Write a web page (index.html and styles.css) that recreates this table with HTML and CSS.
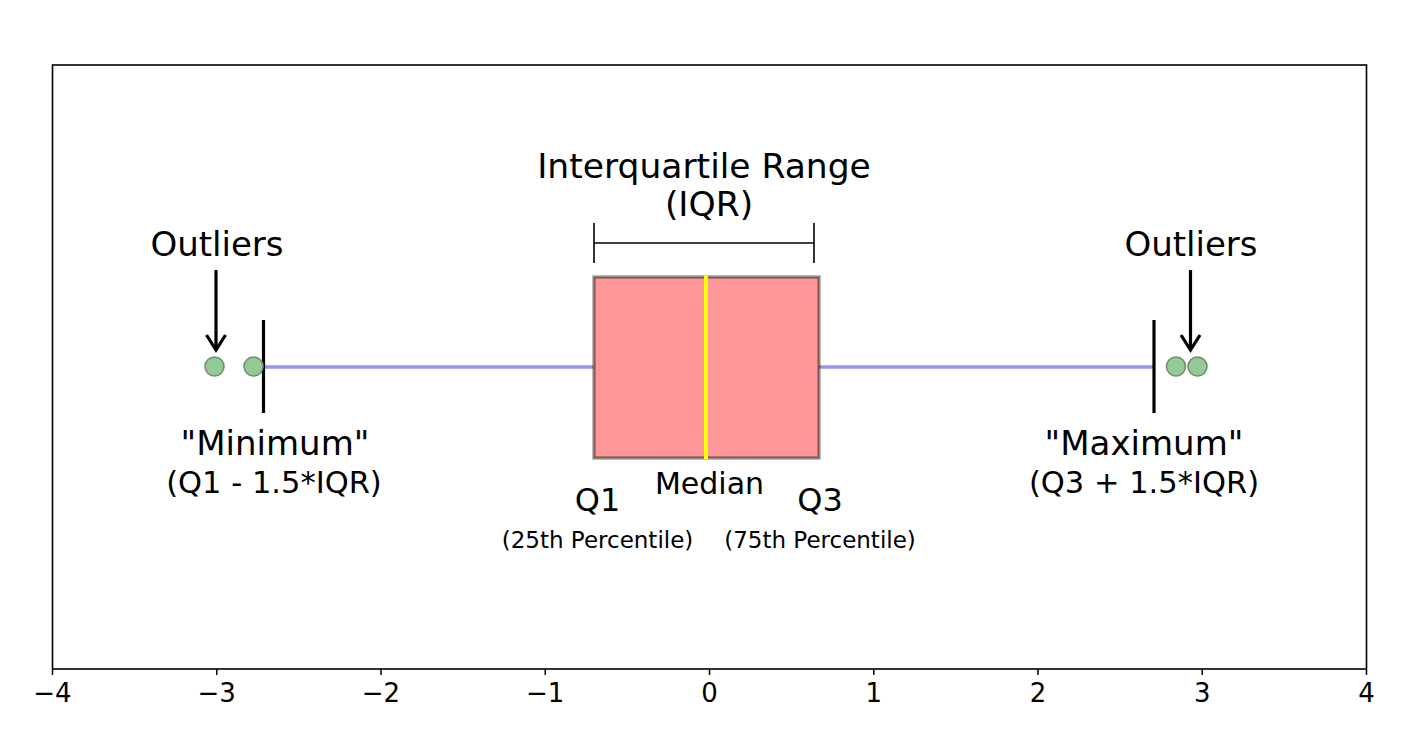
FILE: index.html
```html
<!DOCTYPE html>
<html lang="en">
<head>
<meta charset="utf-8">
<title>Box plot anatomy</title>
<link rel="stylesheet" href="styles.css">
</head>
<body>
<main class="page">
  <figure class="figure">
    <svg class="chart" width="1422" height="740" viewBox="0 0 1422 740" xmlns="http://www.w3.org/2000/svg">
      <!-- axes frame -->
      <rect class="frame" x="52.5" y="65" width="1314" height="604"/>

      <!-- ticks -->
      <g class="ticks">
        <line x1="52.5" y1="669" x2="52.5" y2="675"/>
        <line x1="216.75" y1="669" x2="216.75" y2="675"/>
        <line x1="381" y1="669" x2="381" y2="675"/>
        <line x1="545.25" y1="669" x2="545.25" y2="675"/>
        <line x1="709.5" y1="669" x2="709.5" y2="675"/>
        <line x1="873.75" y1="669" x2="873.75" y2="675"/>
        <line x1="1038" y1="669" x2="1038" y2="675"/>
        <line x1="1202.25" y1="669" x2="1202.25" y2="675"/>
        <line x1="1366.5" y1="669" x2="1366.5" y2="675"/>
      </g>
      <g class="tick-labels">
        <text x="52.5" y="702">−4</text>
        <text x="216.75" y="702">−3</text>
        <text x="381" y="702">−2</text>
        <text x="545.25" y="702">−1</text>
        <text x="709.5" y="702">0</text>
        <text x="873.75" y="702">1</text>
        <text x="1038" y="702">2</text>
        <text x="1202.25" y="702">3</text>
        <text x="1366.5" y="702">4</text>
      </g>

      <!-- whiskers -->
      <line class="whisker" x1="263.5" y1="367" x2="593.5" y2="367"/>
      <line class="whisker" x1="819" y1="367" x2="1154" y2="367"/>
      <line class="cap" x1="263.5" y1="320" x2="263.5" y2="413"/>
      <line class="cap" x1="1154" y1="320" x2="1154" y2="413"/>

      <!-- box -->
      <rect class="box" x="594" y="277" width="225" height="181"/>
      <line class="median" x1="706" y1="275.5" x2="706" y2="459.5"/>

      <!-- outliers -->
      <circle class="outlier" cx="214.5" cy="366.5" r="9.5"/>
      <circle class="outlier" cx="253.5" cy="366.5" r="9.5"/>
      <circle class="outlier" cx="1176" cy="366.5" r="9.5"/>
      <circle class="outlier" cx="1197.5" cy="366.5" r="9.5"/>

      <!-- IQR bracket -->
      <path class="bracket" d="M594 223 V263 M594 243 H814 M814 223 V263"/>

      <!-- arrows -->
      <path class="arrow" d="M216 270 V349"/>
      <path class="arrow-head" d="M206.5 335 L216 350 L225.5 335"/>
      <path class="arrow" d="M1190.5 270 V349"/>
      <path class="arrow-head" d="M1181 335 L1190.5 350 L1200 335"/>

      <!-- labels -->
      <g class="labels">
        <text class="xl" x="704" y="178">Interquartile Range</text>
        <text class="xl" x="709" y="216">(IQR)</text>
        <text class="lg" x="217" y="256">Outliers</text>
        <text class="lg" x="1191" y="256">Outliers</text>
        <text class="lg" x="275" y="455">"Minimum"</text>
        <text class="md" x="274" y="493">(Q1 - 1.5*IQR)</text>
        <text class="lg" x="1144" y="455">"Maximum"</text>
        <text class="md" x="1144" y="493">(Q3 + 1.5*IQR)</text>
        <text class="sm-md" x="709.5" y="494">Median</text>
        <text class="q" x="597.5" y="511">Q1</text>
        <text class="q" x="820" y="511">Q3</text>
        <text class="sm" x="597.5" y="548">(25th Percentile)</text>
        <text class="sm" x="820" y="548">(75th Percentile)</text>
      </g>
    </svg>
  </figure>
</main>
</body>
</html>
```
FILE: styles.css
```css
html, body {
  margin: 0;
  padding: 0;
  background: #ffffff;
}

.page {
  display: flex;
  width: 1422px;
  height: 740px;
  overflow: hidden;
}

.figure {
  margin: 0;
  display: flex;
}

.chart {
  display: block;
  font-family: "DejaVu Sans", "Liberation Sans", sans-serif;
}

.frame {
  fill: none;
  stroke: #000000;
  stroke-width: 1.6;
}

.ticks line {
  stroke: #000000;
  stroke-width: 1.5;
}

.tick-labels text {
  font-size: 26px;
  fill: #000000;
  text-anchor: middle;
}

.whisker {
  stroke: #9595f5;
  stroke-width: 3.5;
}

.cap {
  stroke: #000000;
  stroke-width: 3.2;
}

.box {
  fill: #ff9999;
  stroke: rgba(0, 0, 0, 0.45);
  stroke-width: 3.2;
}

.median {
  stroke: #ffff00;
  stroke-width: 4;
}

.outlier {
  fill: #94cb94;
  stroke: #6e8f6e;
  stroke-width: 1.6;
}

.bracket {
  fill: none;
  stroke: #000000;
  stroke-width: 1.6;
}

.arrow {
  fill: none;
  stroke: #000000;
  stroke-width: 3.2;
}

.arrow-head {
  fill: none;
  stroke: #000000;
  stroke-width: 3.2;
  stroke-linejoin: miter;
  stroke-miterlimit: 10;
}

.labels text {
  fill: #000000;
  text-anchor: middle;
}

.labels .xl {
  font-size: 34.5px;
}

.labels .lg {
  font-size: 34px;
}

.labels .md {
  font-size: 30.5px;
}

.labels .sm-md {
  font-size: 30px;
}

.labels .q {
  font-size: 32px;
}

.labels .sm {
  font-size: 23px;
}
```
